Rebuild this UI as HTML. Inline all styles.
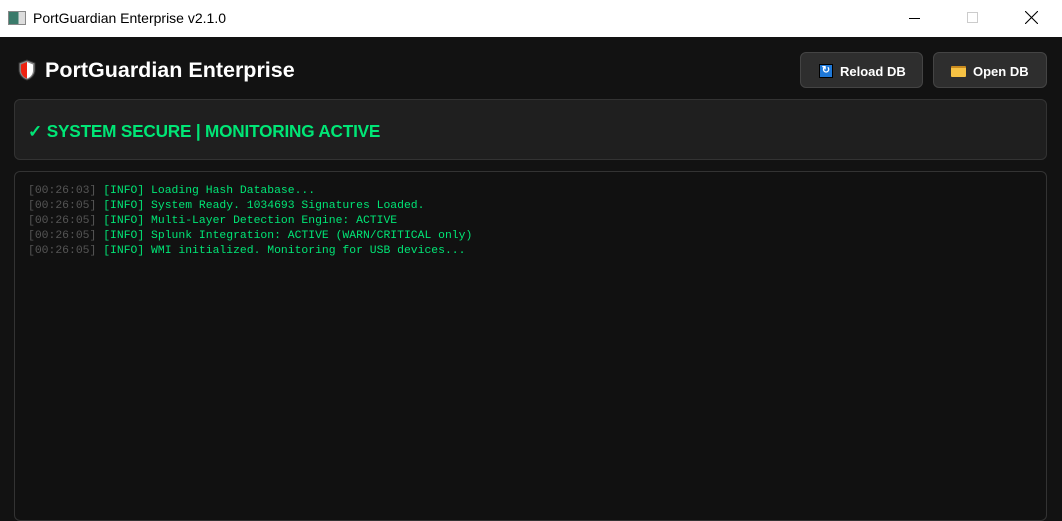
<!DOCTYPE html>
<html><head><meta charset="utf-8"><style>
*{margin:0;padding:0;box-sizing:border-box}
body{width:1062px;height:507px;background:#121212;overflow:hidden;font-family:"Liberation Sans",sans-serif;position:relative}
.tb{position:absolute;left:0;top:0;width:1062px;height:37px;background:#fff}
.tb .t{position:absolute;left:33px;top:10px;font-size:14px;color:#000}
.ic{position:absolute;left:8px;top:11px;width:18px;height:14px;border:1px solid #888;background:linear-gradient(90deg,#3a7a6a 0 60%,#ddd 60%)}
.h1{position:absolute;left:45px;top:58px;font-size:21.5px;font-weight:bold;color:#fff}
.btn{position:absolute;top:52px;height:36px;background:#2e2e2e;border:1px solid #444;border-radius:6px;color:#fff;font-weight:bold;font-size:13px;line-height:37px}
.p1{position:absolute;left:14px;top:99px;width:1033px;height:61px;background:#1f1f1f;border:1px solid #333;border-radius:6px}
.st{position:absolute;left:28px;top:121px;font-size:17.2px;font-weight:bold;color:#00e676;letter-spacing:-0.2px}
.p2{position:absolute;left:14px;top:171px;width:1033px;height:350px;background:#111;border:1px solid #333;border-radius:6px}
.log{position:absolute;left:28px;top:184px;font-family:"Liberation Mono",monospace;font-size:11.4px;line-height:15px;color:#00e676;white-space:pre}
.log span{color:#555}
</style></head><body>
<div class="tb"><div class="ic"></div><div class="t">PortGuardian Enterprise v2.1.0</div>
<div style="position:absolute;left:909px;top:18px;width:11px;height:1px;background:#000"></div>
<div style="position:absolute;left:967px;top:12px;width:11px;height:11px;border:1px solid #ccc"></div>
<svg style="position:absolute;left:1025px;top:11px" width="13" height="13"><path d="M0 0L13 13M13 0L0 13" stroke="#000" stroke-width="1.1"/></svg>
</div>
<svg style="position:absolute;left:17px;top:59px" width="20" height="22" viewBox="0 0 20 22"><path d="M10 1L2 4v7c0 5 4 9 8 10 4-1 8-5 8-10V4z" fill="#888" stroke="#333"/><path d="M10 3L4 5.5v6c0 4 3 7 6 8z" fill="#e21"/><path d="M10 3l6 2.5v6c0 4-3 7-6 8z" fill="#fff"/></svg>
<div class="h1">PortGuardian Enterprise</div>
<div class="btn" style="left:800px;width:123px"><span style="position:absolute;left:18px;top:11px;width:14px;height:14px;background:#1e78d8;border:1px solid #000;color:#fff;font-size:10px;line-height:12px;text-align:center">↻</span><span style="position:absolute;left:39px">Reload DB</span></div>
<div class="btn" style="left:933px;width:114px"><span style="position:absolute;left:17px;top:13px;width:15px;height:11px;background:#f6c244;border-top:2px solid #c98a1e;border-radius:1px"></span><span style="position:absolute;left:39px">Open DB</span></div>
<div class="p1"></div>
<div class="st">✓ SYSTEM SECURE | MONITORING ACTIVE</div>
<div class="p2"></div>
<div class="log"><span>[00:26:03]</span> [INFO] Loading Hash Database...
<span>[00:26:05]</span> [INFO] System Ready. 1034693 Signatures Loaded.
<span>[00:26:05]</span> [INFO] Multi-Layer Detection Engine: ACTIVE
<span>[00:26:05]</span> [INFO] Splunk Integration: ACTIVE (WARN/CRITICAL only)
<span>[00:26:05]</span> [INFO] WMI initialized. Monitoring for USB devices...</div>
</body></html>
